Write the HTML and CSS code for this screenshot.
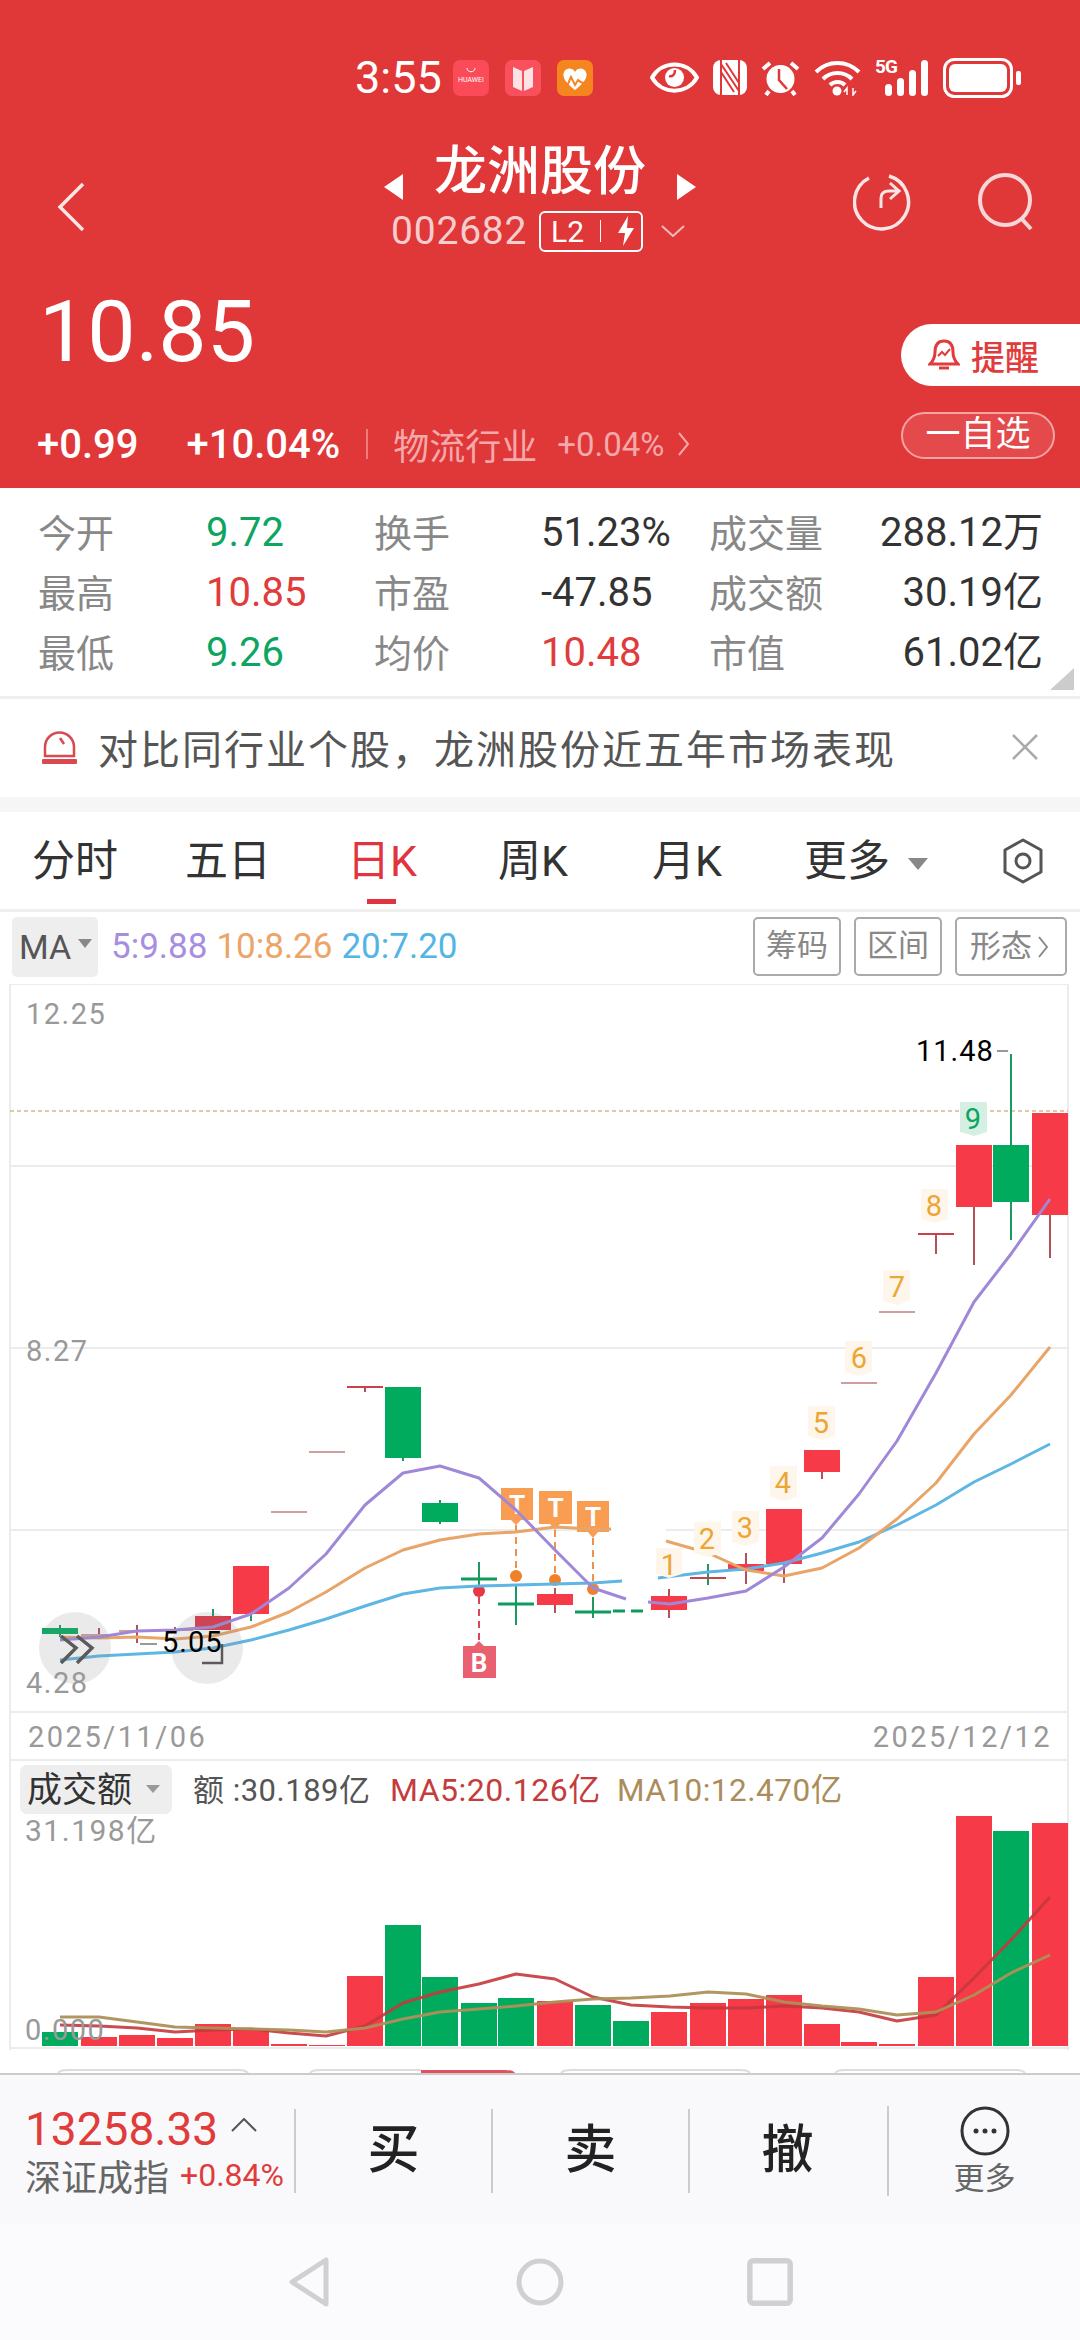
FILE: index.html
```html
<!DOCTYPE html>
<html lang="zh-CN">
<head>
  <meta charset="UTF-8" />
  <title>龙洲股份</title>
  <link rel="stylesheet" href="styles.css">
</head>
<body>
  <!-- 顶部红色区域 -->
  <header class="top">
    <div class="status">
      <span class="clock">3:55</span>
      <svg class="app" viewBox="0 0 36 36"><rect width="36" height="36" rx="7" fill="#fb4a58"/><path d="M14 8c0 5 8 5 8 0" fill="none" stroke="#fff" stroke-width="1"/><text x="18" y="22" class="app-name">HUAWEI</text></svg>
      <svg class="app" viewBox="0 0 36 36"><rect width="36" height="36" rx="7" fill="#f8505c"/><path d="M8 7l9 4v20l-9-4zM28 7l-9 4v20l9-4z" fill="#fde3e3"/></svg>
      <svg class="app" viewBox="0 0 36 36"><rect width="36" height="36" rx="7" fill="#f5861f"/><path d="M18 30C8 22 5 17 7 12c2-4 8-5 11 0 3-5 9-4 11 0 2 5-1 10-11 18z" fill="#fff"/><path d="M0 25c6 0 8 2 11-1l3-7 4 8 3-5c4 4 8 4 15 4" fill="none" stroke="#f5861f" stroke-width="2"/></svg>
      <svg class="sys eye" viewBox="0 0 49 31"><path d="M2 15.500C12 -2 37 -2 47 15.500 37 33 12 33 2 15.500z" fill="none" stroke="#fff" stroke-width="4"/><circle cx="24.500" cy="15.500" r="9.500" fill="#fff"/><path d="M25 8c0 5-3 7-6 6" fill="none" stroke="#e03739" stroke-width="2.500"/></svg>
      <svg class="sys nfc" viewBox="0 0 34 35"><rect width="34" height="35" rx="8" fill="#fff"/><path d="M8 0v35M26 0v35M8 4l18 27M13 3l13 20M8 12l13 20" fill="none" stroke="#e03739" stroke-width="2"/></svg>
      <svg class="sys alarm" viewBox="0 0 39 36"><circle cx="19.500" cy="19" r="14" fill="#fff"/><path d="M18 9v11l8 9" fill="none" stroke="#e03739" stroke-width="2.500"/><path d="M2 9l7-6M37 9l-7-6M8 31l-3 4M31 31l3 4" stroke="#fff" stroke-width="4" fill="none"/></svg>
      <svg class="sys wifi" viewBox="0 0 47 36"><path d="M2 12c12-12 31-12 43 0M9 19c8-8 21-8 29 0M16 25c4-4 11-4 15 0" fill="none" stroke="#fff" stroke-width="4"/><circle cx="23" cy="31" r="4.500" fill="#fff"/><path d="M33 35v-7l-3 4M39 28v7l3-4" fill="none" stroke="#fff" stroke-width="1.500"/></svg>
      <div class="signal">
        <span class="net">5G</span>
        <svg class="bars" viewBox="0 0 45 36"><rect x="2" y="24" width="7" height="12" rx="3.500" fill="#fff"/><rect x="14" y="18" width="7" height="18" rx="3.500" fill="#fff"/><rect x="26" y="10" width="7" height="26" rx="3.500" fill="#fff"/><rect x="38" y="0" width="7" height="36" rx="3.500" fill="#fff"/></svg>
      </div>
      <svg class="sys battery" viewBox="0 0 78 40"><rect x="1.500" y="1.500" width="67" height="37" rx="10" fill="none" stroke="#fff" stroke-width="3"/><rect x="6" y="6" width="58" height="28" rx="6" fill="#fff"/><rect x="73" y="13" width="5" height="14" rx="2" fill="#fff"/></svg>
    </div>

    <nav class="title-bar">
      <svg class="back" viewBox="0 0 30 50"><path d="M27 2L4 25l23 23" fill="none" stroke="#fbe4e4" stroke-width="3.500"/></svg>
      <div class="title-box">
        <div class="title-line">
          <svg class="arrow" viewBox="0 0 19 26"><path d="M19 0v26L0 13z" fill="#fff"/></svg>
          <h1>龙洲股份</h1>
          <svg class="arrow" viewBox="0 0 19 26"><path d="M0 0v26l19-13z" fill="#fff"/></svg>
        </div>
        <div class="code-line">
          <span class="code">002682</span>
          <span class="badge">L2<i></i><svg viewBox="0 0 20 30" class="bolt"><path d="M12 0L2 17h7l-2 13 11-18h-7z" fill="#fff"/></svg></span>
          <svg class="drop" viewBox="0 0 24 12"><path d="M1 1l11 10L23 1" fill="none" stroke="#f3bcbc" stroke-width="2"/></svg>
        </div>
      </div>
      <div class="tools">
        <svg class="tool" viewBox="0 0 60 60"><path d="M36 4A27 27 0 1 1 16 6" fill="none" stroke="#fbe4e4" stroke-width="3.500"/><path d="M28 36V26q0-7 8-7h9M37 11l9 8-9 8" fill="none" stroke="#fbe4e4" stroke-width="3"/></svg>
        <svg class="tool" viewBox="0 0 60 60"><circle cx="30" cy="28" r="25" fill="none" stroke="#f6d6d6" stroke-width="4"/><path d="M46 46l10 11" fill="none" stroke="#f6d6d6" stroke-width="4"/></svg>
      </div>
    </nav>

    <div class="quote">
      <div class="quote-left">
        <div class="price">10.85</div>
        <div class="change">
          <b>+0.99</b><b class="pct">+10.04%</b>
          <i class="sep"></i>
          <span class="sector">物流行业</span>
          <span class="sector-pct">+0.04%</span>
          <svg class="more-arrow" viewBox="0 0 12 24"><path d="M1 1l9 11L1 23" fill="none" stroke="#f3a9a9" stroke-width="2"/></svg>
        </div>
      </div>
      <div class="quote-right">
        <div class="remind">
          <svg class="bell" viewBox="0 0 32 36"><path d="M16 4c-7 0-9 5-9 11 0 6-2 9-5 12h28c-3-3-5-6-5-12 0-6-2-11-9-11zM11 31h10" fill="none" stroke="#e03c3c" stroke-width="3"/><path d="M10 19l4-4 3 3 5-6" fill="none" stroke="#e03c3c" stroke-width="2"/></svg>
          <span>提醒</span>
        </div>
        <div class="watch">一自选</div>
      </div>
    </div>
  </header>

  <!-- 行情数据 -->
  <section class="stats">
    <span class="lab">今开</span><span class="val green">9.72</span><span class="lab">换手</span><span class="val">51.23%</span><span class="lab">成交量</span><span class="val end">288.12万</span>
    <span class="lab">最高</span><span class="val red">10.85</span><span class="lab">市盈</span><span class="val">-47.85</span><span class="lab">成交额</span><span class="val end">30.19亿</span>
    <span class="lab">最低</span><span class="val green">9.26</span><span class="lab">均价</span><span class="val red">10.48</span><span class="lab">市值</span><span class="val end">61.02亿</span>
    <i class="corner"></i>
  </section>

  <div class="notice">
    <svg class="siren" viewBox="0 0 37 36"><path d="M4 27V18a14.500 14.500 0 0 1 29 0v9zM19 9l4 6" fill="none" stroke="#d84a50" stroke-width="2.500"/><rect x="1" y="30" width="35" height="5" rx="1" fill="#d84a50"/></svg>
    <span class="notice-text">对比同行业个股&#65292;龙洲股份近五年市场表现</span>
    <svg class="close" viewBox="0 0 26 26"><path d="M1 1l24 24M25 1L1 25" fill="none" stroke="#aaa" stroke-width="2.500"/></svg>
  </div>

  <!-- K线周期 -->
  <div class="tabs">
    <span class="tab t1">分时</span>
    <span class="tab t2">五日</span>
    <span class="tab t3 on">日K</span>
    <span class="tab t4">周K</span>
    <span class="tab t5">月K</span>
    <span class="tab t6">更多<i class="tri"></i></span>
    <svg class="hex" viewBox="0 0 42 46"><path d="M21 2l18 10v22L21 44 3 34V12z" fill="none" stroke="#555" stroke-width="3" stroke-linejoin="round"/><circle cx="21" cy="23" r="7" fill="none" stroke="#555" stroke-width="3"/></svg>
  </div>

  <div class="ma-row">
    <span class="ma-btn">MA<i class="tri-small"></i></span>
    <span class="ma5">5:9.88</span>
    <span class="ma10">10:8.26</span>
    <span class="ma20">20:7.20</span>
    <div class="ma-tools">
      <span class="tag">筹码</span>
      <span class="tag">区间</span>
      <span class="tag wide">形态<svg viewBox="0 0 10 24" class="tag-arrow"><path d="M1 2l8 10-8 10" fill="none" stroke="#888" stroke-width="2"/></svg></span>
    </div>
  </div>

  <!-- 图表:坐标与屏幕坐标一致 -->
  <svg class="chart" viewBox="0 984 1080 1066">
    <g class="grid">
      <path d="M10 984H1068M10 1166H1068M10 1348H1068M10 1530H612M666 1530H1068M10 1712H1068M10 1760H1068M10 2048H1068M10 984V2050M1068 984V2050"/>
    </g>
    <path class="last-line" d="M10 1111H1068"/>

    <!-- 阴阳线 -->
    <g class="wick-g">
      <path d="M60 1625V1637M213 1609V1630M251 1614V1621M403 1458V1461M440 1500V1524M479 1562V1585M516 1585V1625M593 1597V1618M708 1564V1585M1011 1054V1240"/>
    </g>
    <g class="wick-r">
      <path d="M99 1628V1639M137 1625V1643M175 1627V1633M365 1387V1392M555 1588V1613M669 1589V1618M746 1553V1584M784 1564V1583M822 1472V1479M936 1234V1254M974 1207V1265M1050 1215V1258"/>
    </g>
    <g class="doji">
      <path d="M81 1635H117M119 1631H155M157 1630H193M271 1512H307M309 1452H345M841 1383H877M879 1312H915"/>
      <path class="doji-r" d="M347 1387H383M690 1578H726M918 1234H954"/>
      <path class="doji-g" d="M461 1579H497M498 1604H534M575 1612H611"/>
      <path class="doji-d" d="M613 1611H648"/>
    </g>
    <g class="up">
      <rect x="195" y="1616" width="36" height="14" class="dim"/>
      <rect x="233" y="1566" width="36" height="48"/>
      <rect x="537" y="1594" width="36" height="11"/>
      <rect x="651" y="1596" width="36" height="14"/>
      <rect x="728" y="1564" width="36" height="7"/>
      <rect x="766" y="1509" width="36" height="55"/>
      <rect x="804" y="1450" width="36" height="22"/>
      <rect x="956" y="1145" width="36" height="62"/>
      <rect x="1032" y="1113" width="36" height="102"/>
    </g>
    <g class="down">
      <rect x="42" y="1628" width="36" height="6"/>
      <rect x="385" y="1387" width="36" height="71"/>
      <rect x="422" y="1503" width="36" height="19"/>
      <rect x="993" y="1145" width="36" height="57"/>
    </g>

    <!-- T / B 标记 -->
    <g class="mark-lines">
      <path d="M516 1525V1570M555 1530V1574M593 1538V1583"/>
    </g>
    <path class="mark-line-b" d="M479 1597V1641"/>
    <circle class="dot-t" cx="516" cy="1576" r="6"/>
    <circle class="dot-t" cx="555" cy="1580" r="6"/>
    <circle class="dot-t" cx="593" cy="1589" r="6"/>
    <circle class="dot-b" cx="479" cy="1591" r="6"/>
    <path class="tag-t" d="M501 1488h32v32h-12l-5 5-5-5h-10z"/>
    <path class="tag-t" d="M539 1491h33v33h-12l-5 6-5-6h-11z"/>
    <path class="tag-t" d="M577 1501h32v31h-11l-5 6-5-6h-11z"/>
    <text class="tag-txt" x="517" y="1514">T</text>
    <text class="tag-txt" x="555.500" y="1517">T</text>
    <text class="tag-txt" x="593" y="1526">T</text>
    <path class="tag-b" d="M463 1646h11l5-5 5 5h12v32h-33z"/>
    <text class="tag-txt" x="479" y="1672">B</text>

    <!-- 均线 -->
    <polyline class="line l20" points="60,1660 99,1656 137,1654 175,1652 213,1648 251,1640 289,1630 326,1619 365,1606 403,1594 440,1588 479,1586 516,1585 555,1584 593,1583 622,1581"/>
    <polyline class="line l20" points="658,1578 708,1572 746,1569 784,1563 822,1553 859,1542 897,1525 936,1505 974,1482 1011,1464 1050,1444"/>
    <polyline class="line l10" points="60,1637 99,1638 137,1637 175,1639 213,1636 251,1627 289,1612 326,1592 365,1568 403,1550 440,1540 479,1534 516,1532 555,1527 593,1529 611,1529"/>
    <polyline class="line l10" points="666,1541 708,1553 746,1570 784,1576 822,1568 859,1548 897,1519 936,1483 974,1434 1011,1395 1050,1347"/>
    <polyline class="line l5" points="60,1640 99,1637 137,1631 175,1630 213,1627 251,1614 289,1588 326,1554 365,1505 403,1473 440,1466 479,1478 516,1510 555,1550 593,1588 626,1599"/>
    <polyline class="line l5" points="648,1602 670,1604 708,1598 746,1591 784,1567 822,1538 859,1494 897,1441 936,1373 974,1302 1011,1254 1050,1199"/>

    <!-- 九转序号 -->
    <g class="seq-bg">
      <path d="M656 1548h26v26l-13 4-13-4z"/>
      <path d="M694 1522h27v31l-13 4-14-4z"/>
      <path d="M732 1511h27v31l-13 4-14-4z"/>
      <path d="M770 1466h27v31l-13 4-14-4z"/>
      <path d="M808 1406h27v30l-13 4-14-4z"/>
      <path d="M845 1341h27v31l-13 4-14-4z"/>
      <path d="M883 1270h27v31l-13 4-14-4z"/>
      <path d="M921 1189h27v30l-13 4-14-4z"/>
      <path class="seq-bg-g" d="M960 1102h27v30l-13 4-14-4z"/>
    </g>
    <g class="seq">
      <text x="669" y="1575">1</text>
      <text x="707" y="1549">2</text>
      <text x="745" y="1538">3</text>
      <text x="783" y="1493">4</text>
      <text x="821" y="1433">5</text>
      <text x="859" y="1368">6</text>
      <text x="897" y="1297">7</text>
      <text x="934" y="1216">8</text>
      <text x="973" y="1129" class="seq-g">9</text>
    </g>

    <!-- 悬浮按钮 -->
    <circle class="float" cx="75" cy="1648" r="36"/>
    <circle class="float" cx="207" cy="1648" r="36"/>
    <path class="float-ico" d="M61 1636l15 12-15 15M77 1636l15 12-15 15"/>
    <path class="float-ico thin" d="M202 1663h20v-19"/>

    <!-- 价格标注 -->
    <path class="tick" d="M140 1644H157M997 1051H1008"/>
    <text class="extreme" x="162" y="1652">5.05</text>
    <text class="extreme" x="916" y="1061">11.48</text>
    <text class="axis" x="26" y="1024">12.25</text>
    <text class="axis" x="26" y="1361">8.27</text>
    <text class="axis" x="26" y="1693">4.28</text>
    <text class="axis date" x="28" y="1747">2025/11/06</text>
    <text class="axis date end" x="1052" y="1747">2025/12/12</text>

    <!-- 成交额 -->
    <rect class="vol-btn" x="20" y="1765" width="152" height="49" rx="7"/>
    <text class="vol-name" x="27" y="1802">成交额</text>
    <path class="vol-tri" d="M146 1785h14l-7 8z"/>
    <text class="vol-txt" x="193" y="1801">额 :30.189亿</text>
    <text class="vol-txt ma5t" x="390" y="1801">MA5:20.126亿</text>
    <text class="vol-txt ma10t" x="617" y="1801">MA10:12.470亿</text>
    <text class="axis wide-num" x="25" y="1841">31.198亿</text>

    <g class="down">
      <rect x="42" y="2032" width="36" height="14"/>
      <rect x="385" y="1925" width="36" height="121"/>
      <rect x="422" y="1977" width="36" height="69"/>
      <rect x="461" y="2003" width="36" height="43"/>
      <rect x="498" y="1998" width="36" height="48"/>
      <rect x="575" y="2005" width="36" height="41"/>
      <rect x="613" y="2021" width="36" height="25"/>
      <rect x="993" y="1831" width="36" height="215"/>
    </g>
    <g class="up">
      <rect x="81" y="2037" width="36" height="9"/>
      <rect x="119" y="2035" width="36" height="11"/>
      <rect x="157" y="2038" width="36" height="8"/>
      <rect x="195" y="2024" width="36" height="22"/>
      <rect x="233" y="2029" width="36" height="17"/>
      <rect x="271" y="2044" width="36" height="2"/>
      <rect x="309" y="2045" width="36" height="1"/>
      <rect x="347" y="1976" width="36" height="70"/>
      <rect x="537" y="2001" width="36" height="45"/>
      <rect x="651" y="2012" width="36" height="34"/>
      <rect x="690" y="2003" width="36" height="43"/>
      <rect x="728" y="1999" width="36" height="47"/>
      <rect x="766" y="1995" width="36" height="51"/>
      <rect x="804" y="2024" width="36" height="22"/>
      <rect x="841" y="2042" width="36" height="4"/>
      <rect x="879" y="2044" width="36" height="2"/>
      <rect x="918" y="1977" width="36" height="69"/>
      <rect x="956" y="1816" width="36" height="230"/>
      <rect x="1032" y="1823" width="36" height="223"/>
    </g>
    <polyline class="line vol5" points="60,2025 99,2026 137,2028 175,2032 213,2030 251,2029 289,2033 326,2036 365,2026 403,2003 440,1992 479,1984 516,1974 555,1979 593,1997 631,2005 670,2007 708,2008 746,2008 784,2006 822,2008 859,2012 897,2021 936,2015 974,1978 1011,1940 1050,1897"/>
    <polyline class="line vol10" points="60,2017 99,2017 137,2022 175,2027 213,2028 251,2029 289,2030 326,2032 365,2028 403,2019 440,2012 479,2009 516,2006 555,2002 593,1999 631,1998 670,1996 708,1992 746,1994 784,2002 822,2006 859,2009 897,2015 936,2012 974,1995 1011,1973 1050,1955"/>
    <text class="axis" x="25" y="2040">0.000</text>
  </svg>

  <!-- 下方被遮住的按钮 -->
  <svg class="peek" viewBox="0 0 1080 23">
    <path class="peek-g" d="M58 23q2-3 10-3h170q8 0 10 3M310 23q2-3 10-3h101M561 23q2-3 10-3h169q8 0 10 3M835 23q2-3 10-3h170q8 0 10 3"/>
    <path class="peek-r" d="M421 23v-3h84q8 0 10 3z"/>
  </svg>

  <footer class="toolbar">
    <div class="index">
      <div class="index-top"><span class="index-val">13258.33</span><svg class="caret" viewBox="0 0 26 14"><path d="M1 13L13 1l12 12" fill="none" stroke="#555" stroke-width="2"/></svg></div>
      <div class="index-bot"><span class="index-name">深证成指</span><span class="index-pct">+0.84%</span></div>
    </div>
    <div class="act">买</div>
    <div class="act">卖</div>
    <div class="act">撤</div>
    <div class="act-more">
      <svg class="more-ico" viewBox="0 0 50 50"><circle cx="25" cy="25" r="23" fill="none" stroke="#333" stroke-width="3"/><circle cx="16" cy="25" r="2.500" fill="#333"/><circle cx="25" cy="25" r="2.500" fill="#333"/><circle cx="34" cy="25" r="2.500" fill="#333"/></svg>
      <span>更多</span>
    </div>
  </footer>

  <div class="sysnav">
    <svg class="nav-ico tri-ico" viewBox="0 0 42 50"><path d="M38 3v44L4 25z" fill="none" stroke="#d0d0d0" stroke-width="5" stroke-linejoin="round"/></svg>
    <svg class="nav-ico" viewBox="0 0 48 48"><circle cx="24" cy="24" r="21" fill="none" stroke="#d0d0d0" stroke-width="5"/></svg>
    <svg class="nav-ico" viewBox="0 0 42 44"><rect x="2.500" y="2.500" width="37" height="39" rx="3" fill="none" stroke="#d0d0d0" stroke-width="5"/></svg>
  </div>
</body>
</html>
```

FILE: styles.css
```css
* {
  box-sizing: border-box;
}
body {
  margin: 0;
  width: 1080px;
  height: 2340px;
  overflow: hidden;
  background: #fff;
  font-family: Roboto, "Noto Sans CJK SC", sans-serif;
  color: #333;
}
i {
  font-style: normal;
}
svg {
  display: block;
  flex: none;
}

/* 顶部 */
.top {
  height: 488px;
  background: #e03739;
  color: #fff;
}
.status {
  height: 140px;
  padding: 58px 59px 0 355px;
  display: flex;
  align-items: flex-start;
}
.clock {
  font-size: 45px;
  line-height: 40px;
  width: 98px;
}
.app {
  width: 36px;
  height: 36px;
  margin: 2px 16px 0 0;
}
.app-name {
  font-size: 7px;
  fill: #fff;
  text-anchor: middle;
}
.sys {
  margin-top: 3px;
}
.eye {
  width: 49px;
  height: 31px;
  margin-left: 41px;
  margin-top: 4px;
}
.nfc {
  width: 34px;
  height: 35px;
  margin-left: 14px;
  margin-top: 2px;
}
.alarm {
  width: 39px;
  height: 36px;
  margin-left: 14px;
  margin-top: 2px;
}
.wifi {
  width: 47px;
  height: 36px;
  margin-left: 14px;
  margin-top: 2px;
}
.signal {
  position: relative;
  width: 53px;
  height: 36px;
  margin: 2px 0 0 14px;
}
.net {
  position: absolute;
  left: 0;
  top: -3px;
  font-size: 19px;
  line-height: 20px;
  font-weight: 700;
  letter-spacing: -1px;
}
.bars {
  position: absolute;
  right: 0;
  top: 0;
  width: 45px;
  height: 36px;
}
.battery {
  width: 78px;
  height: 40px;
  margin-left: 15px;
  margin-top: 0;
}

.title-bar {
  height: 118px;
  display: grid;
  grid-template-columns: 1fr auto 1fr;
  align-items: start;
}
.back {
  width: 30px;
  height: 50px;
  margin: 42px 0 0 56px;
}
.title-box {
  width: 312px;
}
.title-line {
  display: flex;
  align-items: center;
  justify-content: space-between;
  height: 60px;
  margin-top: 2px;
}
.title-line h1 {
  margin: 0;
  font-size: 53px;
  line-height: 60px;
  font-weight: 500;
}
.arrow {
  width: 19px;
  height: 26px;
  margin-top: 30px;
}
.code-line {
  display: flex;
  align-items: center;
  height: 42px;
  margin-top: 8px;
  margin-left: 7px;
}
.code {
  font-size: 39px;
  letter-spacing: 0.8px;
  color: #f6cdcd;
  width: 148px;
}
.badge {
  display: flex;
  align-items: center;
  width: 104px;
  height: 41px;
  padding-left: 10px;
  border: 2px solid #fff;
  border-radius: 6px;
  font-size: 30px;
}
.badge i {
  width: 1px;
  height: 22px;
  margin: 0 15px 0 16px;
  background: #fff;
}
.bolt {
  width: 20px;
  height: 30px;
}
.drop {
  width: 24px;
  height: 12px;
  margin-left: 18px;
}
.tools {
  display: flex;
  justify-content: flex-end;
  gap: 62px;
  padding: 32px 45px 0 0;
}
.tool {
  width: 60px;
  height: 60px;
}

.quote {
  height: 190px;
  padding-top: 32px;
  display: flex;
  justify-content: space-between;
}
.quote-left {
  padding-left: 39px;
}
.price {
  font-size: 86px;
  line-height: 84px;
  height: 136px;
}
.change {
  display: flex;
  align-items: center;
  height: 36px;
  margin-left: -2px;
  font-size: 40px;
}
.change b {
  font-weight: 500;
}
.pct {
  margin-left: 48px;
}
.sep {
  width: 2px;
  height: 30px;
  margin: 0 25px 0 26px;
  background: #ec7d7d;
}
.sector {
  font-size: 36px;
  color: #f3a9a9;
}
.sector-pct {
  margin-left: 20px;
  font-size: 33px;
  color: #f3a9a9;
}
.more-arrow {
  width: 12px;
  height: 24px;
  margin-left: 13px;
}
.quote-right {
  width: 179px;
  padding-top: 34px;
}
.remind {
  height: 62px;
  display: flex;
  align-items: center;
  gap: 11px;
  padding-left: 27px;
  background: #fff;
  border-radius: 31px 0 0 31px;
  color: #e03c3c;
  font-size: 34px;
  font-weight: 500;
}
.bell {
  width: 32px;
  height: 36px;
}
.watch {
  width: 154px;
  height: 47px;
  margin-top: 26px;
  border: 2px solid #f3a5a5;
  border-radius: 24px;
  background: #e4494b;
  text-align: center;
  font-size: 35px;
  line-height: 41px;
}

/* 行情数据 */
.stats {
  position: relative;
  height: 211px;
  padding: 14px 37px 0 38px;
  display: grid;
  grid-template-columns: 168px 168px 167px 168px 160px 1fr;
  grid-auto-rows: 60px;
  align-items: center;
  border-bottom: 3px solid #eee;
}
.lab {
  font-size: 38px;
  padding-bottom: 4px;
  color: #888;
}
.val {
  font-size: 40px;
  line-height: 60px;
  padding-top: 2px;
  color: #333;
}
.val.end {
  text-align: right;
  white-space: nowrap;
}
.red {
  color: #e03c3c;
}
.green {
  color: #0da55f;
}
.corner {
  position: absolute;
  right: 6px;
  bottom: 6px;
  width: 24px;
  height: 22px;
  background: #ccc;
  clip-path: polygon(100% 0, 100% 100%, 0 100%);
}

.notice {
  height: 113px;
  padding: 6px 42px 9px 41px;
  display: flex;
  align-items: center;
  border-bottom: 15px solid #f6f6f6;
}
.siren {
  width: 37px;
  height: 36px;
}
.notice-text {
  margin-left: 20px;
  flex: 1;
  font-size: 40px;
  letter-spacing: 2px;
  color: #555;
}
.close {
  width: 26px;
  height: 26px;
}

/* 周期 */
.tabs {
  position: relative;
  height: 100px;
  display: flex;
  align-items: center;
  border-bottom: 3px solid #eee;
  font-size: 43px;
  color: #333;
}
.tab {
  position: absolute;
  top: 24px;
  line-height: 50px;
}
.t1 { left: 32px; }
.t2 { left: 185px; }
.t3 { left: 347px; }
.t4 { left: 498px; }
.t5 { left: 652px; }
.t6 { left: 804px; }
.on {
  color: #e0353f;
}
.on::after {
  content: "";
  position: absolute;
  left: 20px;
  bottom: -18px;
  width: 29px;
  height: 5px;
  background: #e0353f;
}
.tri {
  position: absolute;
  left: 104px;
  top: 22px;
  width: 20px;
  height: 12px;
  background: #888;
  clip-path: polygon(0 0, 100% 0, 50% 100%);
}
.hex {
  position: absolute;
  left: 1002px;
  top: 26px;
  width: 42px;
  height: 46px;
}

.ma-row {
  height: 72px;
  padding: 5px 13px 0 12px;
  display: flex;
  align-items: flex-start;
  font-size: 35px;
  line-height: 60px;
}
.ma-btn {
  width: 86px;
  height: 60px;
  padding-left: 7px;
  background: #eee;
  border-radius: 5px;
  color: #555;
  font-size: 34px;
  position: relative;
}
.tri-small {
  position: absolute;
  right: 6px;
  top: 22px;
  width: 14px;
  height: 9px;
  background: #888;
  clip-path: polygon(0 0, 100% 0, 50% 100%);
}
.ma5 {
  margin-left: 13px;
  color: #a78ee0;
}
.ma10 {
  margin-left: 9px;
  color: #eda468;
}
.ma20 {
  margin-left: 9px;
  color: #53b4e6;
}
.ma-tools {
  margin-left: auto;
  display: flex;
  gap: 13px;
}
.tag {
  width: 88px;
  height: 59px;
  border: 2px solid #aaa;
  border-radius: 5px;
  font-size: 31px;
  line-height: 53px;
  color: #888;
  text-align: center;
}
.tag.wide {
  width: 112px;
  display: flex;
  align-items: center;
  gap: 6px;
  padding-left: 13px;
}
.tag-arrow {
  width: 10px;
  height: 24px;
}

/* 图表 */
.chart {
  width: 1080px;
  height: 1066px;
  font-family: Roboto, "Noto Sans CJK SC", sans-serif;
}
.grid path {
  fill: none;
  stroke: #ececec;
  stroke-width: 2;
}
.last-line {
  fill: none;
  stroke: #d8b68c;
  stroke-width: 1.500;
  stroke-dasharray: 4 3;
}
.wick-g path {
  fill: none;
  stroke: #1a9a60;
  stroke-width: 2;
}
.wick-r path {
  fill: none;
  stroke: #b5505a;
  stroke-width: 2;
}
.doji path {
  fill: none;
  stroke: #cf9fa0;
  stroke-width: 2;
}
.doji .doji-r {
  stroke: #c8434e;
}
.doji .doji-g {
  stroke: #0d9c5c;
  stroke-width: 3;
}
.doji .doji-d {
  stroke: #0d9c5c;
  stroke-width: 3;
  stroke-dasharray: 12 6;
}
.up rect {
  fill: #f63a47;
}
.up .dim {
  fill: #dd3547;
}
.down rect {
  fill: #00ab5e;
}
.mark-lines path {
  fill: none;
  stroke: #ed9150;
  stroke-width: 2;
  stroke-dasharray: 7 5;
}
.mark-line-b {
  fill: none;
  stroke: #d8465a;
  stroke-width: 2;
  stroke-dasharray: 7 5;
}
.dot-t {
  fill: #f0802a;
}
.dot-b {
  fill: #e63946;
}
.tag-t {
  fill: #f99d52;
}
.tag-b {
  fill: #e96070;
}
.tag-txt {
  font-size: 26px;
  font-weight: 700;
  fill: #fff;
  text-anchor: middle;
}
.line {
  fill: none;
  stroke-width: 3;
  stroke-linejoin: round;
}
.l5 {
  stroke: #a088d8;
}
.l10 {
  stroke: #e9a468;
}
.l20 {
  stroke: #5eb6e4;
}
.vol5 {
  stroke: #c4383d;
  stroke-opacity: 0.9;
}
.vol10 {
  stroke: #ad9058;
  stroke-opacity: 0.95;
}
.seq-bg path {
  fill: #fef6eb;
}
.seq-bg .seq-bg-g {
  fill: #d5efe2;
}
.seq text {
  font-size: 29px;
  fill: #eda534;
  text-anchor: middle;
}
.seq .seq-g {
  fill: #0da55f;
}
.float {
  fill: #888;
  fill-opacity: 0.18;
}
.float-ico {
  fill: none;
  stroke: #5a5a5a;
  stroke-width: 3.500;
}
.float-ico.thin {
  stroke-width: 2.500;
}
.tick {
  fill: none;
  stroke: #999;
  stroke-width: 2;
}
.extreme {
  font-size: 29px;
  letter-spacing: 1px;
  fill: #000;
}
.axis {
  font-size: 29px;
  letter-spacing: 1.500px;
  fill: #999;
}
.axis.date {
  letter-spacing: 2.500px;
}
.axis.wide-num {
  font-size: 30px;
}
.axis.end {
  text-anchor: end;
}
.vol-btn {
  fill: #eee;
}
.vol-name {
  font-size: 35px;
  fill: #333;
}
.vol-tri {
  fill: #999;
}
.vol-txt {
  font-size: 31px;
  letter-spacing: 0.500px;
  fill: #555;
}
.vol-txt.ma5t {
  font-size: 32px;
  fill: #c43c3c;
}
.vol-txt.ma10t {
  font-size: 31.500px;
  fill: #ab8c5a;
}

/* 底部 */
.peek {
  width: 1080px;
  height: 23px;
}
.peek-g {
  fill: none;
  stroke: #ddd;
  stroke-width: 2;
}
.peek-r {
  fill: #e2525a;
}
.toolbar {
  height: 150px;
  padding-top: 34px;
  background: #f9f9fb;
  border-top: 2px solid #ccc;
  display: flex;
  align-items: flex-start;
}
.index {
  width: 294px;
  height: 84px;
  padding-left: 25px;
}
.index-top {
  display: flex;
  align-items: center;
  height: 40px;
  white-space: nowrap;
}
.index-val {
  font-size: 46px;
  line-height: 40px;
  color: #e03c3c;
}
.caret {
  width: 26px;
  height: 14px;
  margin: -8px 0 0 13px;
}
.index-bot {
  display: flex;
  align-items: center;
  height: 36px;
  margin-top: 8px;
  white-space: nowrap;
}
.index-name {
  font-size: 36px;
  color: #666;
}
.index-pct {
  margin-left: 11px;
  font-size: 32px;
  color: #e03c3c;
}
.act {
  width: 197px;
  height: 84px;
  border-left: 2px solid #ccc;
  text-align: center;
  font-size: 52px;
  line-height: 84px;
  font-weight: 500;
  color: #222;
}
.act-more {
  flex: 1;
  height: 90px;
  border-left: 2px solid #ccc;
  margin-left: 2px;
  display: flex;
  flex-direction: column;
  align-items: center;
  margin-top: -3px;
  color: #666;
  font-size: 31px;
  line-height: 46px;
}
.more-ico {
  width: 50px;
  height: 50px;
}
.sysnav {
  height: 117px;
  padding-left: 6px;
  background: #fbfbfd;
  display: flex;
  justify-content: center;
  align-items: center;
}
.nav-ico {
  width: 48px;
  height: 48px;
  margin: 0 91px;
}
.tri-ico {
  width: 42px;
  height: 50px;
  margin: 0 95px 0 87px;
}
```
